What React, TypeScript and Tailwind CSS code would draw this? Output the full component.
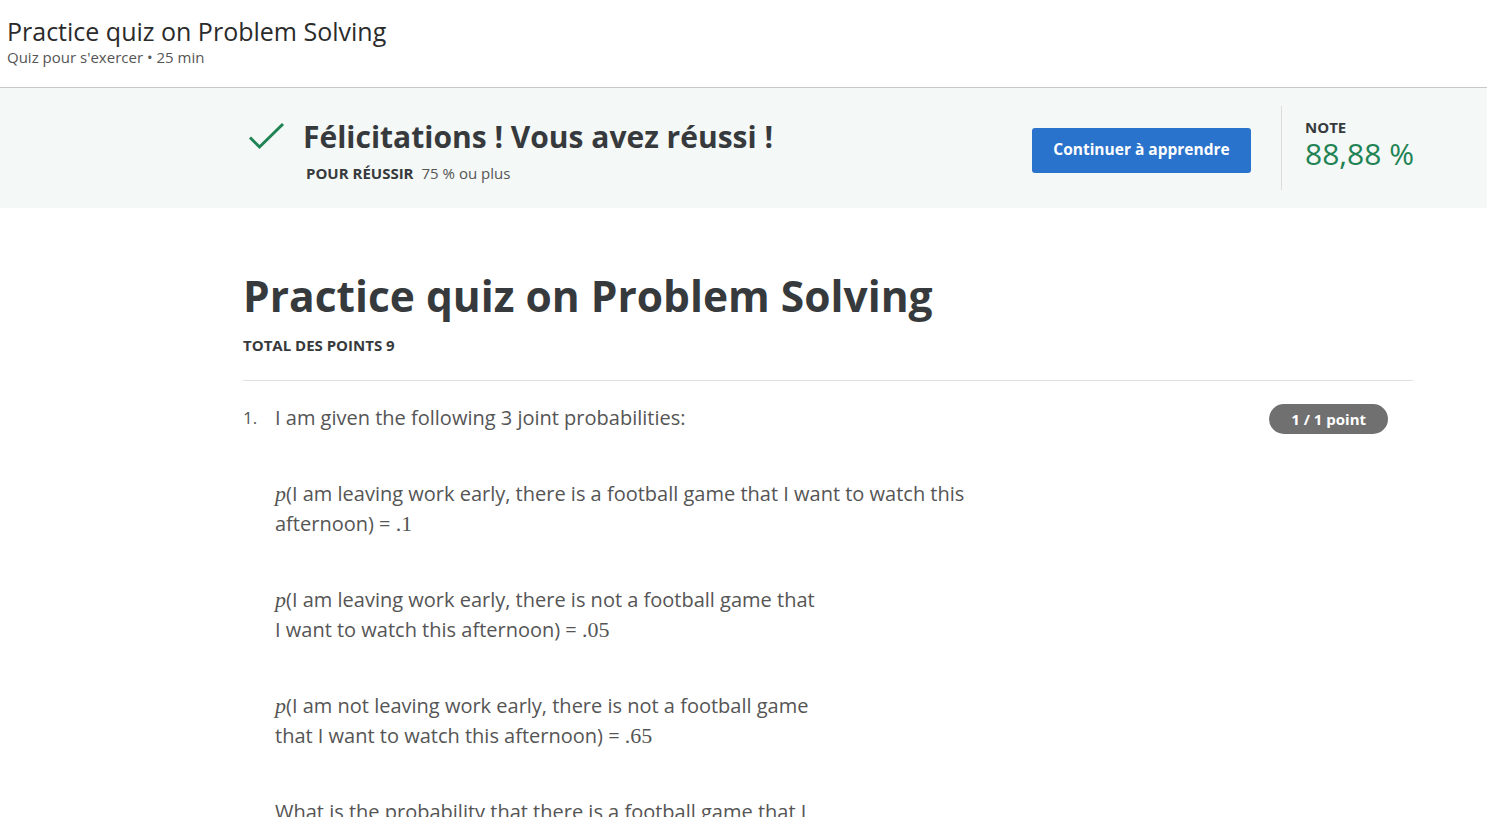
import React from "react";

const sans = { fontFamily: '"Open Sans", "Noto Sans", Arial, sans-serif' };
const serif = '"Liberation Serif", "DejaVu Serif", serif';

function MathP() {
  return <span className="italic text-[22px]" style={{ fontFamily: serif }}>p</span>;
}
function Num({ v }: { v: string }) {
  return <span className="text-[22px]" style={{ fontFamily: serif }}>{v}</span>;
}

export default function App() {
  return (
    <div className="min-h-[817px] bg-white text-[#373a3c]" style={sans}>
      <header className="h-[88px] border-b border-[#c8c8c8] pl-[7px] pt-[14px]">
        <h1 className="text-[25px] leading-[34px] text-[#2b2b2b]">Practice quiz on Problem Solving</h1>
        <div className="-mt-[2px] text-[15px] leading-[22px] text-[#555]">Quiz pour s'exercer • 25 min</div>
      </header>

      <section className="h-[120px] bg-[#f4f8f7]">
        <div className="ml-[243px] flex h-full w-[1170px] items-center">
          <div className="flex flex-1 items-start pt-[4px]">
            <svg width="38" height="30" viewBox="0 0 38 30" className="ml-[5px] mt-[5px]">
              <path d="M2 15.5 L11.5 25 L35 2" fill="none" stroke="#1f8354" strokeWidth="3" />
            </svg>
            <div className="ml-[17px]">
              <div className="text-[30px] font-bold leading-[40px] text-[#373a3c]">Félicitations ! Vous avez réussi !</div>
              <div className="mt-[5px] pl-[3px] text-[15px] leading-[22px]">
                <span className="font-bold text-[#373a3c]">POUR RÉUSSIR</span>
                <span className="ml-[8px] text-[#555]">75 % ou plus</span>
              </div>
            </div>
          </div>
          <button className="mt-[4px] h-[45px] w-[219px] rounded-[3px] bg-[#2a73cc] text-[15.5px] font-bold text-white">
            Continuer à apprendre
          </button>
          <div className="ml-[30px] h-[84px] border-l border-[#dcdcdc]" />
          <div className="ml-[23px] w-[108px] whitespace-nowrap pb-[8px]">
            <div className="text-[15px] font-bold leading-[20px] text-[#373a3c]">NOTE</div>
            <div className="text-[30px] leading-[34px] text-[#1f8354]">88,88 %</div>
          </div>
        </div>
      </section>

      <main className="ml-[243px] w-[1170px] pt-[60px]">
        <h2 className="text-[42.5px] font-bold leading-[56px] text-[#373a3c]">Practice quiz on Problem Solving</h2>
        <div className="mt-[11px] text-[15px] font-bold leading-[20px] text-[#373a3c]">TOTAL DES POINTS 9</div>
        <div className="mt-[25px] border-t border-[#e1e1e1]" />
        <div className="mt-[22px] flex">
          <div className="w-[32px] text-[17px] leading-[30px] text-[#555]">1.</div>
          <div className="flex-1 text-[20px] leading-[30px] text-[#555]">
            <p>I am given the following 3 joint probabilities:</p>
            <p className="mt-[46px]">
              <MathP />(I am leaving work early, there is a football game that I want to watch this<br />
              afternoon) = <Num v=".1" />
            </p>
            <p className="mt-[46px]">
              <MathP />(I am leaving work early, there is not a football game that<br />
              I want to watch this afternoon) = <Num v=".05" />
            </p>
            <p className="mt-[46px]">
              <MathP />(I am not leaving work early, there is not a football game<br />
              that I want to watch this afternoon) = <Num v=".65" />
            </p>
            <p className="mt-[46px]">
              What is the probability that there is a football game that I<br />
              want to watch this afternoon?
            </p>
          </div>
          <div className="mr-[25px] mt-[1px] flex items-start">
            <span className="flex h-[30px] items-center rounded-full bg-[#707070] px-[22px] text-[15px] font-bold text-white">
              1 / 1 point
            </span>
          </div>
        </div>
      </main>
    </div>
  );
}
